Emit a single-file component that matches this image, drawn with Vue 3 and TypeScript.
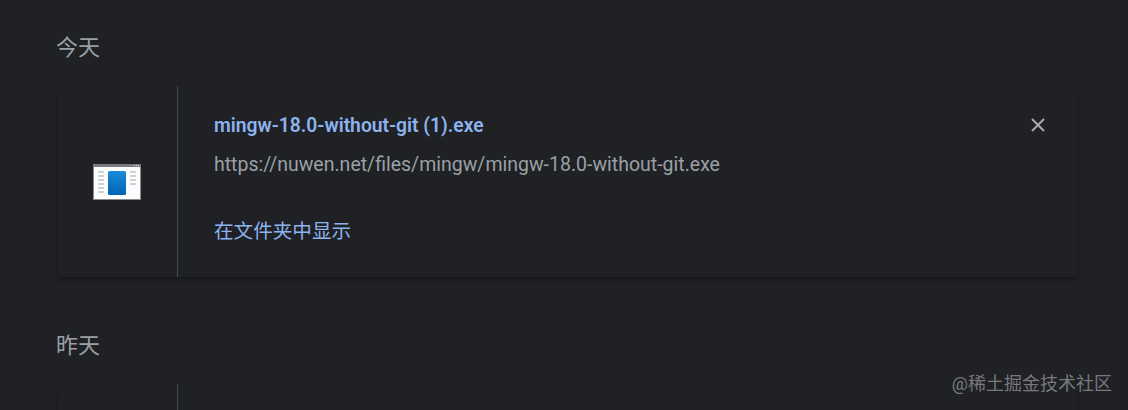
<template>
  <div class="page">
    <section v-for="group in groups" :key="group.label" class="group">
      <div class="day">{{ group.label }}</div>
      <div class="card">
        <div class="icon-col">
          <svg v-if="group.item" class="file-icon" width="48" height="36" viewBox="0 0 48 36">
            <rect x="0.5" y="0.5" width="47" height="35" fill="#fbfcfd" stroke="#8a8a8a" />
            <rect x="0" y="0" width="48" height="3" fill="#7b7b7b" />
            <rect x="41" y="1" width="1" height="1" fill="#e8e8e8" />
            <rect x="43" y="1" width="1" height="1" fill="#e8e8e8" />
            <rect x="45" y="1" width="1" height="1" fill="#e8e8e8" />
            <path
              d="M5 8h6M5 12h6M5 16h6M5 20h6M5 24h6M5 28h6M37 8h6M37 12h6M37 16h6M37 20h6"
              stroke="#a6a6a6"
              stroke-width="1"
            />
            <defs>
              <linearGradient id="book" x1="0" y1="0" x2="0" y2="1">
                <stop offset="0" stop-color="#1c8ad8" />
                <stop offset="1" stop-color="#0063b8" />
              </linearGradient>
            </defs>
            <rect x="15" y="7" width="18" height="24" rx="1.5" fill="url(#book)" />
          </svg>
        </div>
        <div v-if="group.item" class="body">
          <div class="name">{{ group.item.name }}</div>
          <div class="url">{{ group.item.url }}</div>
          <div class="action">{{ group.item.action }}</div>
          <svg class="close" width="14" height="14" viewBox="0 0 14 14">
            <path d="M1 1l12 12M13 1L1 13" stroke="#a8aaae" stroke-width="2" />
          </svg>
        </div>
      </div>
    </section>
    <div class="mark">@稀土掘金技术社区</div>
  </div>
</template>

<script setup lang="ts">
interface Item {
  name: string
  url: string
  action: string
}

const groups: { label: string; item?: Item }[] = [
  {
    label: '今天',
    item: {
      name: 'mingw-18.0-without-git (1).exe',
      url: 'https://nuwen.net/files/mingw/mingw-18.0-without-git.exe',
      action: '在文件夹中显示',
    },
  },
  { label: '昨天' },
]
</script>

<style>
html,
body {
  background: #202124;
  margin: 0;
  overflow: hidden;
}
</style>

<style scoped>
.page {
  background: #202124;
  font-family: Roboto, "Noto Sans CJK SC", sans-serif;
  height: 410px;
  overflow: hidden;
  padding: 0 51px 0 58px;
  position: relative;
}

.group {
  padding-top: 33px;
}

.group + .group {
  padding-top: 54px;
}

.day {
  color: #9aa0a6;
  font-size: 22px;
  line-height: 30px;
  margin-left: -2px;
}

.card {
  background: #202124;
  box-shadow: 0 2px 5px rgb(0 0 0 / 28%);
  display: flex;
  height: 182px;
  margin-top: 32px;
}

.icon-col {
  align-items: center;
  border-right: 1px solid #45484b;
  display: flex;
  flex: none;
  justify-content: center;
  margin-top: -9px;
  padding-top: 9px;
  width: 119px;
}

.file-icon {
  margin-left: -2px;
  margin-top: -8px;
}

.body {
  flex: 1;
  padding: 11px 0 0 36px;
  position: relative;
}

.name {
  color: #8cb3ee;
  font-size: 19.3px;
  font-weight: 600;
  line-height: 40px;
}

.url {
  color: #9aa0a6;
  font-size: 19.5px;
  line-height: 38px;
}

.action {
  color: #8cb3ee;
  font-size: 19.6px;
  line-height: 30px;
  margin-top: 33px;
}

.close {
  position: absolute;
  right: 32px;
  top: 23px;
}

.mark {
  bottom: 14px;
  color: #77797c;
  font-size: 18px;
  line-height: 24px;
  position: absolute;
  right: 16px;
}
</style>
